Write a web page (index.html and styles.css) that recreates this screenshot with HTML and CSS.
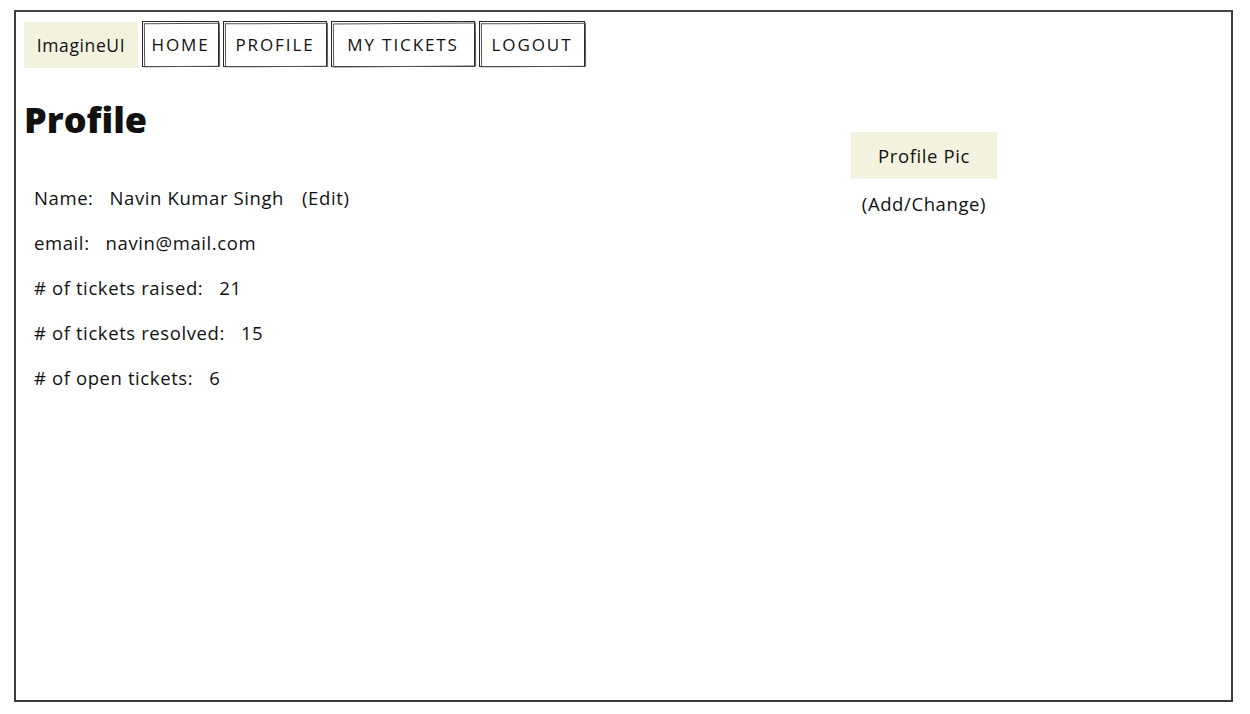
FILE: index.html
```html
<!DOCTYPE html>
<html>
<head>
<meta charset="utf-8">
<title>Profile</title>
<link rel="stylesheet" href="styles.css">
</head>
<body>
<div class="frame">
  <nav class="nav">
    <div class="brand">ImagineUI</div>
    <a class="btn btn-home">HOME</a>
    <a class="btn btn-profile">PROFILE</a>
    <a class="btn btn-tickets">MY TICKETS</a>
    <a class="btn btn-logout">LOGOUT</a>
  </nav>
  <div class="content">
    <section class="left">
      <h1 class="title">Profile</h1>
      <ul class="info">
        <li><span class="label">Name:</span><span class="value">Navin Kumar Singh</span><span class="edit">(Edit)</span></li>
        <li><span class="label">email:</span><span class="value">navin@mail.com</span></li>
        <li><span class="label"># of tickets raised:</span><span class="value">21</span></li>
        <li><span class="label"># of tickets resolved:</span><span class="value">15</span></li>
        <li><span class="label"># of open tickets:</span><span class="value">6</span></li>
      </ul>
    </section>
    <aside class="right">
      <div class="pic">Profile Pic</div>
      <div class="change">(Add/Change)</div>
    </aside>
  </div>
</div>
</body>
</html>
```
FILE: styles.css
```css
* { box-sizing: border-box; }
html, body { margin: 0; padding: 0; background: #fff; }
body {
  font-family: "Open Sans", "Noto Sans", "Liberation Sans", sans-serif;
  font-variant-ligatures: none;
  color: #111;
  width: 1250px;
  height: 714px;
  overflow: hidden;
}
.frame {
  position: relative;
  margin: 10px 0 0 14px;
  width: 1219px;
  height: 692px;
  border: 2px solid #3c3c3c;
  border-top-color: #444;
  padding: 9px 0 0 8px;
}
.nav {
  display: flex;
  align-items: flex-start;
  gap: 4px;
  height: 47px;
}
.brand {
  width: 114px;
  height: 46px;
  margin-top: 1px;
  background: #f3f2df;
  font-size: 17.5px;
  letter-spacing: 0.6px;
  display: flex;
  align-items: center;
  justify-content: center;
}
.btn {
  position: relative;
  height: 46px;
  border: 1.5px solid #2a2a2a;
  font-size: 17px;
  letter-spacing: 1.9px;
  display: flex;
  align-items: center;
  justify-content: center;
  color: #111;
}
.btn::after {
  content: "";
  position: absolute;
  inset: 1px -2px -1px 1px;
  border: 1px solid #555;
  transform: rotate(-0.4deg);
  pointer-events: none;
}
.btn-home { width: 77px; }
.btn-profile { width: 104px; }
.btn-tickets { width: 144px; }
.btn-logout { width: 106px; }
.content {
  display: flex;
}
.left {
  width: 827px;
}
.title {
  margin: 29px 0 0 0;
  font-size: 36px;
  line-height: 46px;
  font-weight: 800;
}
.info {
  list-style: none;
  margin: 32px 0 0 10px;
  padding: 0;
  font-size: 18.5px;
  letter-spacing: 0.6px;
}
.info li {
  height: 45px;
  line-height: 45px;
  white-space: nowrap;
}
.label { margin-right: 16px; }
.edit { margin-left: 18px; }
.right {
  display: flex;
  flex-direction: column;
  align-items: center;
  width: 146px;
  padding-top: 64px;
}
.pic {
  width: 146px;
  height: 47px;
  background: #f3f2df;
  font-size: 18.5px;
  letter-spacing: 0.6px;
  display: flex;
  align-items: center;
  justify-content: center;
}
.change {
  margin-top: 12px;
  font-size: 18.5px;
  letter-spacing: 0.6px;
  line-height: 25px;
}
```
